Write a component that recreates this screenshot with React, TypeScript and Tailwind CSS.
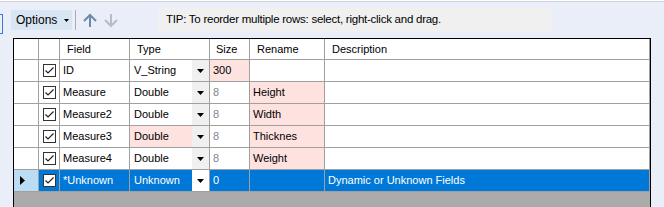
import React from 'react';

type Row = {
  field: string;
  type: string;
  size: string;
  rename: string;
  desc: string;
  typePink?: boolean;
  sizePink?: boolean;
  renamePink?: boolean;
  sizeGray?: boolean;
  selected?: boolean;
};

const rows: Row[] = [
  { field: 'ID', type: 'V_String', size: '300', rename: '', desc: '', sizePink: true },
  { field: 'Measure', type: 'Double', size: '8', rename: 'Height', desc: '', renamePink: true, sizeGray: true },
  { field: 'Measure2', type: 'Double', size: '8', rename: 'Width', desc: '', renamePink: true, sizeGray: true },
  { field: 'Measure3', type: 'Double', size: '8', rename: 'Thicknes', desc: '', typePink: true, renamePink: true, sizeGray: true },
  { field: 'Measure4', type: 'Double', size: '8', rename: 'Weight', desc: '', renamePink: true, sizeGray: true },
  { field: '*Unknown', type: 'Unknown', size: '0', rename: '', desc: 'Dynamic or Unknown Fields', selected: true },
];

const cols = 'grid grid-cols-[25px_21px_70px_80px_40px_75px_325px]';

function Check() {
  return (
    <div className="w-[13px] h-[13px] border border-[#333] bg-white flex items-center justify-center">
      <svg width="11" height="11" viewBox="0 0 11 11">
        <path d="M1.5 5.5 L4 8 L9.5 2.5" stroke="#222" strokeWidth="1.2" fill="none" />
      </svg>
    </div>
  );
}

function DropBtn({ white }: { white?: boolean }) {
  return (
    <div className={`w-[17px] h-full ${white ? 'bg-white' : 'bg-[#f0f0f0]'} flex items-center justify-center`}>
      <svg width="7" height="4" viewBox="0 0 7 4">
        <path d="M0 0 H7 L3.5 4 Z" fill="#000" />
      </svg>
    </div>
  );
}

export default function App() {
  return (
    <div
      className="w-[664px] h-[207px] overflow-hidden bg-[#e9eef8] flex flex-col text-[11px] text-black"
      style={{ fontFamily: '"Liberation Sans", Arial, sans-serif' }}
    >
      <div className="h-[1px] bg-white" />
      <div className="h-[1px] bg-[#cfd2d8]" />

      {/* toolbar */}
      <div className="flex items-start h-[36px] pt-[6px]">
        <div className="w-[3px] h-[20px] mt-[6px] border-y border-r border-[#3a7bd5]" />
        <div className="ml-[8px] mt-[2px] w-[61px] h-[20px] bg-[#d8e6f4] flex items-center pl-[5px] text-[12px]">
          <span>Options</span>
          <svg className="ml-[7px]" width="5" height="3" viewBox="0 0 5 3">
            <path d="M0 0 H5 L2.5 3 Z" fill="#000" />
          </svg>
        </div>
        <div className="ml-[3px] mt-[2px] w-[1px] h-[20px] bg-[#a8adb5]" />
        <svg className="ml-[6px] mt-[5px]" width="16" height="15" viewBox="0 0 16 15">
          <path d="M8 14 V2 M2 8 L8 2 L14 8" stroke="#6d89a8" strokeWidth="2" fill="none" />
        </svg>
        <svg className="ml-[5px] mt-[5px]" width="16" height="15" viewBox="0 0 16 15">
          <path d="M8 1 V13 M2 7 L8 13 L14 7" stroke="#b6bdc7" strokeWidth="2" fill="none" />
        </svg>
        <div className="ml-[39px] w-[394px] h-[24px] bg-[#f0f0f0] flex items-center pl-[8px] text-[11.5px] tracking-[-0.25px]">
          TIP: To reorder multiple rows: select, right-click and drag.
        </div>
      </div>

      {/* grid */}
      <div className="ml-[13px] w-[638px] flex-1 border border-black border-b-0 bg-[#ababab] flex flex-col">
        <div className={`${cols} h-[21px] bg-white`}>
          <div className="border-r border-b border-[#a0a0a0]" />
          <div className="border-r border-b border-[#a0a0a0]" />
          <div className="border-r border-b border-[#a0a0a0] pl-[7px] flex items-center">Field</div>
          <div className="border-r border-b border-[#a0a0a0] pl-[7px] flex items-center">Type</div>
          <div className="border-r border-b border-[#a0a0a0] pl-[6px] flex items-center">Size</div>
          <div className="border-r border-b border-[#a0a0a0] pl-[7px] flex items-center">Rename</div>
          <div className="border-r border-b border-[#a0a0a0] pl-[7px] flex items-center">Description</div>
        </div>
        {rows.map((r) => {
          const sel = r.selected;
          const base = 'border-r border-b border-[#a0a0a0] flex items-center';
          const cellBg = (pink?: boolean) => (sel ? 'bg-[#0078d7] text-white' : pink ? 'bg-[#fde2e0]' : 'bg-white');
          return (
            <div key={r.field} className={`${cols} h-[22px]`}>
              <div className={`${base} ${sel ? 'bg-[#bcdcf4]' : 'bg-white'} pl-[6px]`}>
                {sel && (
                  <svg width="6" height="9" viewBox="0 0 6 9">
                    <path d="M0 0 L5 4.5 L0 9 Z" fill="#000" />
                  </svg>
                )}
              </div>
              <div className={`${base} ${cellBg()} justify-center`}>
                <Check />
              </div>
              <div className={`${base} ${cellBg()} pl-[3px]`}>{r.field}</div>
              <div className={`${base} ${cellBg(r.typePink)} pl-[4px] justify-between`}>
                <span>{r.type}</span>
                <DropBtn white={sel} />
              </div>
              <div className={`${base} ${cellBg(r.sizePink)} pl-[3px] ${!sel && r.sizeGray ? 'text-[#808694]' : ''}`}>{r.size}</div>
              <div className={`${base} ${cellBg(r.renamePink)} pl-[3px]`}>{r.rename}</div>
              <div className={`${base} ${cellBg()} pl-[3px]`}>{r.desc}</div>
            </div>
          );
        })}
      </div>
    </div>
  );
}
